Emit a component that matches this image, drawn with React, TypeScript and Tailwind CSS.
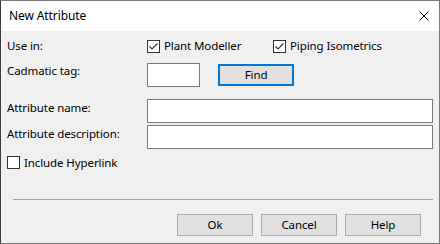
function CheckBox({ checked, label }: { checked: boolean; label: string }) {
    return (
        <label className="flex items-center gap-[4px]">
            <span className="flex h-[13px] w-[13px] items-center justify-center border border-[#333333] bg-white">
                {checked && (
                    <svg width="11" height="11" viewBox="0 0 11 11">
                        <path d="M1.5 5.5 L4 8 L9.5 2.5" fill="none" stroke="#333333" strokeWidth="1.2" />
                    </svg>
                )}
            </span>
            <span>{label}</span>
        </label>
    )
}

function TextBox({ className }: { className: string }) {
    return <div className={`h-[24px] border border-[#7a7a7a] bg-white ${className}`} />
}

function DlgButton({ label }: { label: string }) {
    return (
        <button className="flex h-[22px] w-[76px] items-center justify-center border border-[#adadad] bg-[#e1e1e1]">
            {label}
        </button>
    )
}

export default function App() {
    return (
        <div
            className="flex h-[244px] w-[440px] flex-col border border-l-[#3c3c3c] border-[#7a7a7a] bg-[#f0f0f0] text-[11.5px] leading-none tracking-[-0.1px] text-black"
            style={{ fontFamily: '"Noto Sans", "Open Sans", sans-serif' }}
        >
            {/* title bar */}
            <div className="flex h-[30px] items-center justify-between bg-white pl-[8px] pr-[10px]">
                <span className="pb-[1px] text-[12px]">New Attribute</span>
                <svg width="10" height="10" viewBox="0 0 10 10">
                    <path d="M0.5 0.5 L9.5 9.5 M9.5 0.5 L0.5 9.5" stroke="#000" strokeWidth="1" />
                </svg>
            </div>

            <div className="flex flex-1 flex-col px-[6px]">
                <div className="mt-[8px] flex h-[14px] items-center">
                    <span className="mb-[1px] w-[140px]">Use in:</span>
                    <div className="flex gap-[10px]">
                        <div className="w-[116px]">
                            <CheckBox checked label="Plant Modeller" />
                        </div>
                        <CheckBox checked label="Piping Isometrics" />
                    </div>
                </div>

                <div className="mt-[10px] flex items-center">
                    <span className="mb-[8px] w-[140px]">Cadmatic tag:</span>
                    <TextBox className="w-[53px]" />
                    <button className="ml-[18px] flex h-[22px] w-[76px] items-center justify-center border-2 border-[#0078d7] bg-[#e1e1e1]">
                        Find
                    </button>
                </div>

                <div className="mt-[12px] flex items-center">
                    <span className="mb-[6px] w-[140px]">Attribute name:</span>
                    <TextBox className="flex-1" />
                </div>

                <div className="mt-[2px] flex items-center">
                    <span className="mb-[6px] w-[140px]">Attribute description:</span>
                    <TextBox className="flex-1" />
                </div>

                <div className="mt-[7px] flex h-[13px] items-center">
                    <CheckBox checked={false} label="Include Hyperlink" />
                </div>

                <div className="ml-[6px] mt-[30px] h-px bg-[#a0a0a0]" />

                <div className="mt-[14px] flex justify-end gap-[8px] pr-[12px]">
                    <DlgButton label="Ok" />
                    <DlgButton label="Cancel" />
                    <DlgButton label="Help" />
                </div>
            </div>
        </div>
    )
}
